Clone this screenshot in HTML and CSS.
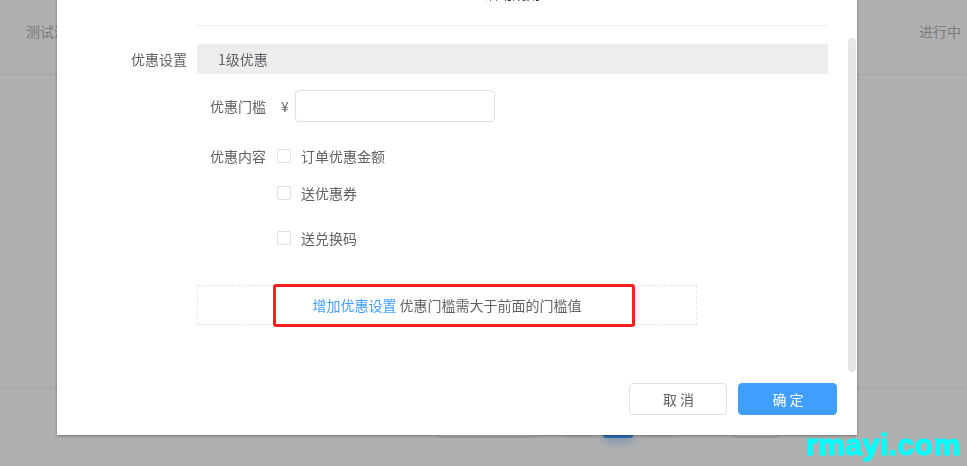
FILE: index.html
```html
<!DOCTYPE html>
<html lang="zh-CN">
<head>
    <meta charset="UTF-8">
    <title>编辑活动</title>
    <link rel="stylesheet" href="styles.css">
</head>
<body>
<div class="page">
    <div class="list-row">
        <span class="cell-name">测试活动一</span>
        <span class="cell-status">进行中</span>
    </div>
    <div class="list-body"></div>
    <div class="pager">
        <span class="pager-size"></span>
        <span class="pager-num"></span>
        <span class="pager-num active"></span>
        <span class="pager-num"></span>
        <span class="pager-jump"></span>
    </div>
</div>

<div class="mask"></div>

<div class="dialog">
    <div class="dialog-body">
        <div class="form">
            <div class="form-row">
                <span class="form-label"></span>
                <div class="form-title">活动规则</div>
            </div>
            <div class="form-row form-row-level">
                <label class="form-label">优惠设置</label>
                <div class="form-content">
                    <div class="level-bar">1级优惠</div>
                    <div class="sub-row">
                        <span class="sub-label">优惠门槛</span>
                        <span class="yuan">¥</span>
                        <input type="text" class="text-input">
                    </div>
                    <div class="sub-row sub-row-top">
                        <span class="sub-label">优惠内容</span>
                        <div class="check-list">
                            <label class="check-item"><span class="check-box"></span>订单优惠金额</label>
                            <label class="check-item check-item-2"><span class="check-box"></span>送优惠券</label>
                            <label class="check-item check-item-3"><span class="check-box"></span>送兑换码</label>
                        </div>
                    </div>
                    <div class="add-box">
                        <a class="add-link">增加优惠设置</a> 优惠门槛需大于前面的门槛值
                        <span class="mark"></span>
                    </div>
                </div>
            </div>
        </div>
        <div class="scroll-track"><div class="scroll-thumb"></div></div>
    </div>
    <div class="dialog-foot">
        <button class="btn">取消</button>
        <button class="btn btn-primary">确定</button>
    </div>
</div>

<div class="watermark">rmayi.com</div>
</body>
</html>
```

FILE: styles.css
```css
body {
    margin: 0;
    padding: 0;
    background-color: #ffffff;
    font-family: "Noto Sans CJK SC", "Liberation Sans", sans-serif;
    font-size: 14px;
    color: #606266;
    overflow: hidden;
}
.page {
    height: 466px;
}
.list-row {
    display: flex;
    justify-content: space-between;
    height: 75px;
    padding: 21px 6px 0 26px;
    box-sizing: border-box;
    border-bottom: 1px solid #f1f1f1;
    line-height: 20px;
    color: #b4b4b4;
}
.list-body {
    height: 312px;
    border-bottom: 1px solid #f1f1f1;
}
.pager {
    display: flex;
    margin-top: 22px;
    padding-left: 438px;
}
.pager span {
    height: 28px;
    box-sizing: border-box;
    border-radius: 3px;
}
.pager-size {
    width: 99px;
    border: 1px solid #dcdfe6;
    margin-right: 26px;
}
.pager-num {
    width: 30px;
    margin-right: 10px;
    background-color: #f4f4f5;
}
.pager-num.active {
    background-color: #409eff;
    box-shadow: 0 4px 10px rgba(64,158,255,0.4);
}
.pager-jump {
    width: 46px;
    margin-left: 50px;
    border: 1px solid #dcdfe6;
}
.mask {
    position: fixed;
    left: 0;
    top: 0;
    width: 100%;
    height: 100%;
    background-color: rgba(0,0,0,0.31);
}
.dialog {
    position: fixed;
    left: 57px;
    top: -35px;
    width: 800px;
    height: 470px;
    display: flex;
    flex-direction: column;
    background-color: #ffffff;
    box-shadow: 0 1px 3px rgba(0,0,0,0.35);
}
.dialog-body {
    display: flex;
    height: 407px;
}
.form {
    flex: 1;
    padding: 18px 20px 0 60px;
}
.form-row {
    display: flex;
}
.form-label {
    width: 80px;
    flex-shrink: 0;
    padding-right: 10px;
    box-sizing: border-box;
    text-align: right;
    line-height: 30px;
}
.form-title {
    flex: 1;
    line-height: 20px;
    padding-bottom: 22px;
    border-bottom: 1px solid #ebeef5;
    text-align: center;
    color: #303133;
}
.form-row-level {
    margin-top: 18px;
}
.form-content {
    flex: 1;
}
.level-bar {
    height: 30px;
    line-height: 30px;
    padding-left: 21px;
    background-color: #ededed;
}
.sub-row {
    display: flex;
    align-items: center;
    margin-top: 16px;
    padding-left: 13px;
}
.sub-row-top {
    align-items: flex-start;
    margin-top: 24px;
    line-height: 20px;
}
.sub-label {
    width: 67px;
    flex-shrink: 0;
}
.yuan {
    width: 18px;
    padding-left: 4px;
    box-sizing: border-box;
}
.text-input {
    width: 200px;
    height: 32px;
    box-sizing: border-box;
    border: 1px solid #dcdfe6;
    border-radius: 4px;
    padding: 0 10px;
    outline: none;
}
.check-item {
    display: flex;
    align-items: center;
    height: 20px;
}
.check-item-2 {
    margin-top: 17px;
}
.check-item-3 {
    margin-top: 25px;
}
.check-box {
    width: 14px;
    height: 14px;
    box-sizing: border-box;
    border: 1px solid #dcdfe6;
    border-radius: 2px;
    margin-right: 10px;
}
.add-box {
    position: relative;
    width: 500px;
    height: 40px;
    margin-top: 37px;
    box-sizing: border-box;
    border: 1px dashed #e4e7ed;
    line-height: 38px;
    text-align: center;
}
.add-link {
    color: #409eff;
    cursor: pointer;
}
.mark {
    position: absolute;
    left: 75px;
    top: -2px;
    width: 362px;
    height: 43px;
    box-sizing: border-box;
    border: 3px solid #ff1f1f;
    border-radius: 3px;
}
.scroll-track {
    width: 8px;
    margin-right: 1px;
}
.scroll-thumb {
    margin-top: 73px;
    height: 334px;
    border-radius: 4px;
    background-color: #e6e6e6;
}
.dialog-foot {
    display: flex;
    justify-content: flex-end;
    gap: 11px;
    padding: 11px 20px 20px;
}
.btn {
    width: 98px;
    height: 32px;
    padding: 0 0 0 4px;
    border: 1px solid #dcdfe6;
    border-radius: 4px;
    background-color: #ffffff;
    color: #606266;
    font-family: "Noto Sans CJK SC", sans-serif;
    font-size: 14px;
    letter-spacing: 3px;
    cursor: pointer;
}
.btn-primary {
    width: 99px;
    background-color: #409eff;
    border-color: #409eff;
    color: #ffffff;
}
.watermark {
    position: fixed;
    left: 806px;
    top: 430px;
    font-family: "Liberation Sans", sans-serif;
    font-size: 30px;
    font-weight: bold;
    line-height: 30px;
    letter-spacing: 0.5px;
    color: #00ffff;
    -webkit-text-stroke: 1.2px #00ffff;
}
```
